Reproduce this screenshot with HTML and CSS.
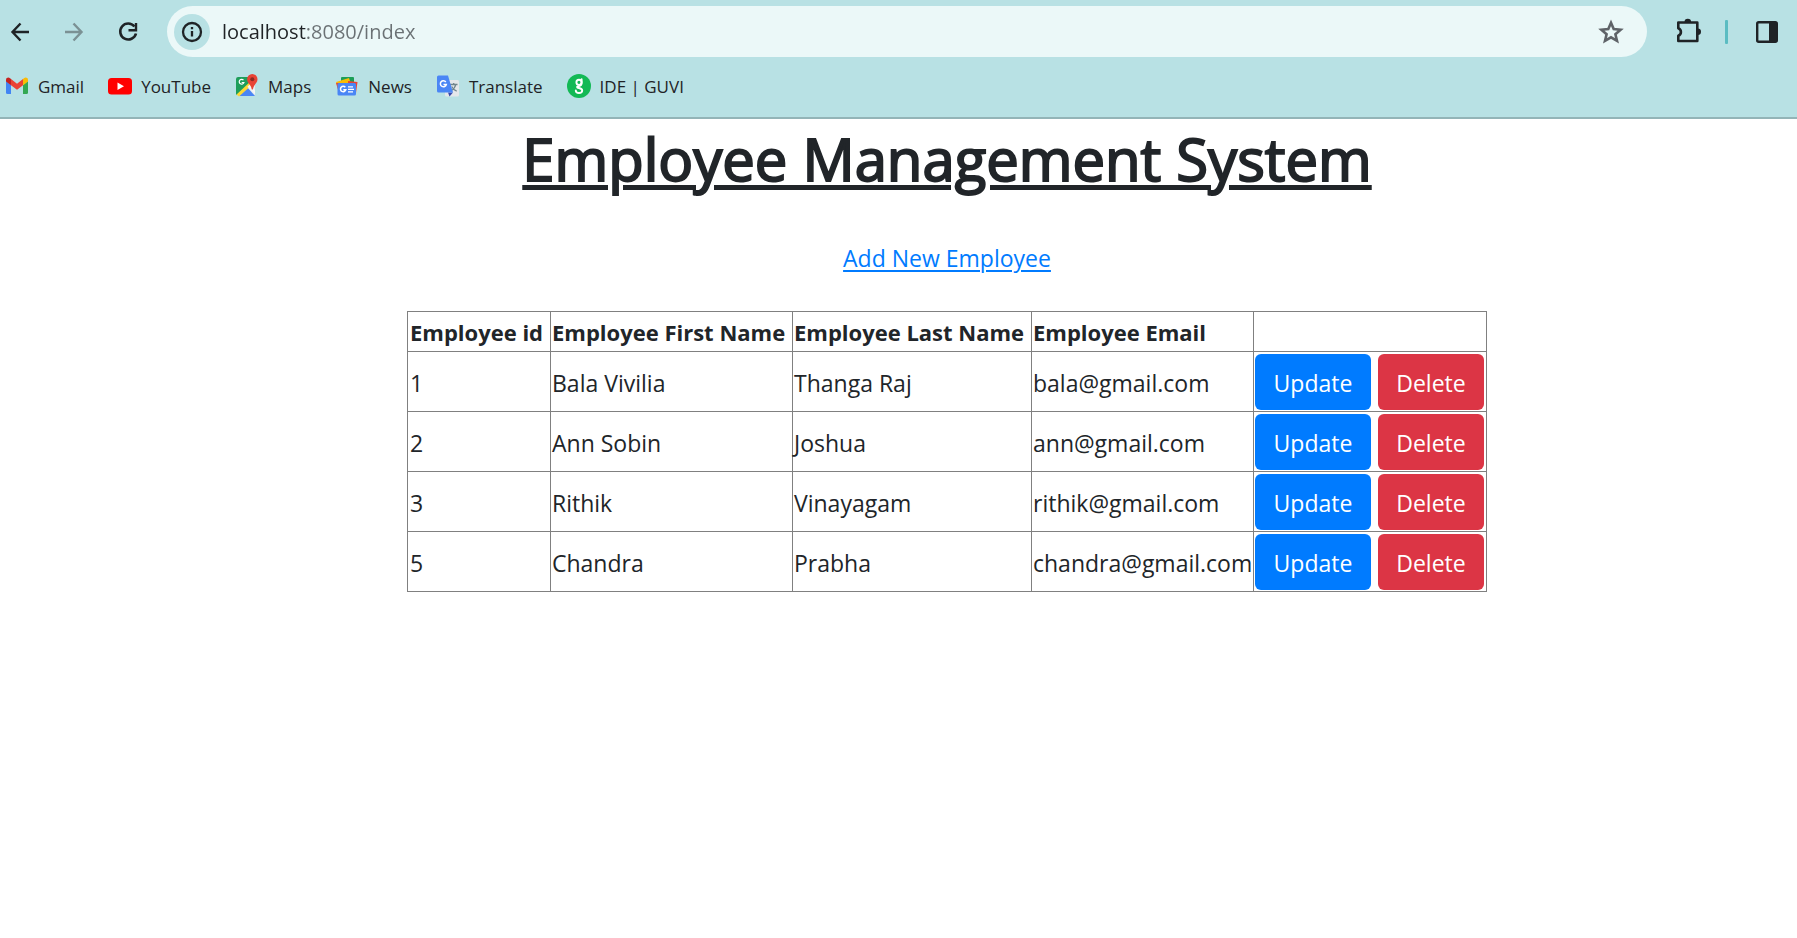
FILE: index.html
```html
<!DOCTYPE html>
<html lang="en">
<head>
<meta charset="utf-8">
<meta name="viewport" content="width=device-width, initial-scale=1">
<title>Employee Management System</title>
<link rel="stylesheet" href="styles.css">
</head>
<body>
<header class="browser">
  <div class="toolbar">
    <div class="nav">
      <button class="tool" aria-label="Back"><svg width="20" height="20" viewBox="0 0 20 20" fill="none" stroke="#1f2326" stroke-width="2.4"><path d="M19 10H3M10.500 1.500L2.500 10l8 8.500"/></svg></button>
      <button class="tool" aria-label="Forward"><svg width="20" height="20" viewBox="0 0 20 20" fill="none" stroke="#7b9194" stroke-width="2.400"><path d="M1 10h16M9.500 1.500L17.500 10l-8 8.500"/></svg></button>
      <button class="tool" aria-label="Reload"><svg width="20" height="20" viewBox="0 0 20 20" fill="none" stroke="#1f2326" stroke-width="2.600"><path d="M16.500 4.500A8 8 0 1 0 18 11.500"/><path d="M18 1v7.200h-7.500" stroke-width="2.400"/></svg></button>
    </div>
    <div class="omnibox">
      <button class="site-info" aria-label="View site information"><svg width="22" height="22" viewBox="0 0 22 22" fill="none" stroke="#1f2326" stroke-width="2.300"><circle cx="11" cy="11" r="9"/><path d="M11 10v5.500M11 6v2.200"/></svg></button>
      <input class="address" type="text" aria-label="Address" value="localhost:8080/index" spellcheck="false">
      <button class="tool" aria-label="Bookmark this tab"><svg width="26" height="26" viewBox="0 0 26 26" fill="none" stroke="#5f6368" stroke-width="2.600"><path d="M13 3.800l2.700 6.300 6.900.6-5.200 4.500 1.600 6.700-6-3.600-6 3.600 1.600-6.700-5.200-4.500 6.900-.6z"/></svg></button>
    </div>
    <div class="actions">
      <button class="tool" aria-label="Extensions"><svg width="28" height="28" viewBox="0 0 28 28"><path d="M4.300 4.500h19v18.500h-19v-5.300a4 4 0 0 0 0-7.500z" fill="none" stroke="#1f2326" stroke-width="2.600" stroke-linejoin="round"/><path d="M10.500 4a3.300 3.300 0 0 1 6.600 0zM23.700 10.500a3.300 3.300 0 0 1 0 6.600z" fill="#1f2326"/></svg></button>
      <span class="divider"></span>
      <button class="tool" aria-label="Side panel"><svg width="24" height="24" viewBox="0 0 24 24"><rect x="2.200" y="2.200" width="19.600" height="19.600" rx="1.500" fill="none" stroke="#1f2326" stroke-width="2.400"/><path d="M14 2h7.500v20H14z" fill="#1f2326"/></svg></button>
    </div>
  </div>
  <nav class="bookmarks" aria-label="Bookmarks">
    <a class="bookmark" href="#"><svg width="24" height="24" viewBox="0 0 24 24"><path d="M1 7l5 4v9H2.500A1.500 1.500 0 0 1 1 18.500z" fill="#4285f4"/><path d="M23 7l-5 4v9h3.500a1.500 1.500 0 0 0 1.500-1.500z" fill="#34a853"/><path d="M6 5l6 4.700L18 5v6.200l-6 4.600-6-4.600z" fill="#ea4335"/><path d="M1 7.400V6c0-2.300 2.500-3 4-1.800L6 5v6.200z" fill="#c5221f"/><path d="M23 7.400V6c0-2.300-2.500-3-4-1.800L18 5v6.200z" fill="#fbbc04"/></svg>Gmail</a>
    <a class="bookmark" href="#"><svg width="24" height="24" viewBox="0 0 24 24"><rect y="4" width="24" height="16.500" rx="3.500" fill="#f00"/><path d="M9.500 8.500v7.500l6.500-3.750z" fill="#fff"/></svg>YouTube</a>
    <a class="bookmark" href="#"><svg width="24" height="24" viewBox="0 0 24 24"><rect x="1" y="3" width="19" height="19" rx="2" fill="#e8eaed"/><path d="M3 3h13l-2 6 1 2L2 21.500 1 20V5q0-2 2-2z" fill="#1e9e5a"/><path d="M3 22L12 13l8 9z" fill="#4a86f5"/><path d="M1.500 20.500L16 7l3 2L4 22.500z" fill="#fdd835"/><path d="M12.500 12.700l2-2 5.500 5.500V20z" fill="#f5f5f5"/><path d="M17.300 0a5.200 5.200 0 0 1 5.200 5.300c0 4-3.700 4.700-4.700 10.200h-1c-1-5.500-4.700-6.200-4.700-10.200A5.200 5.200 0 0 1 17.300 0z" fill="#e84335"/><circle cx="17.300" cy="5.300" r="2" fill="#8d2b23"/><path d="M8.500 6.200a2.400 2.400 0 1 0 .4 2.300H6.700" fill="none" stroke="#fff" stroke-width="1.200"/></svg>Maps</a>
    <a class="bookmark" href="#"><svg width="24" height="24" viewBox="0 0 24 24"><rect x="6" y="3" width="13" height="9" rx="1" fill="#1b9e57"/><path d="M1 8l13-4 3 9-13 6z" fill="#fbbc04"/><path d="M13 7l9.500 1-1.500 11-8-2z" fill="#ea4335"/><path d="M1 9l3 10V9z" fill="#ea4335"/><rect x="2.500" y="9" width="18.500" height="12.500" rx="1.500" fill="#4a86f5"/><path d="M10.300 13.300a2.700 2.700 0 1 0 .5 2.500H8.300" fill="none" stroke="#fff" stroke-width="1.500"/><path d="M13 12.800h5M13 15.300h6M13 17.800h5" stroke="#fff" stroke-width="1.300"/></svg>News</a>
    <a class="bookmark" href="#"><svg width="24" height="24" viewBox="0 0 24 24"><rect x="9" y="6" width="14" height="16.500" rx="1.500" fill="#e4e7ea"/><path d="M14 10.500h7.500M17.700 9v1.500M19.700 10.500c-.5 3-2.500 5-4.500 6.200M15.700 12.500c1 2 3 4 5 4.700" fill="none" stroke="#71858c" stroke-width="1.300"/><path d="M12 18.500h5L13.500 22.500z" fill="#3949ab"/><path d="M2.500 1.500H12L17 18.500H2.500A1.500 1.500 0 0 1 1 17V3q0-1.500 1.500-1.500z" fill="#4a86f5"/><path d="M9.800 8a3 3 0 1 0 .5 2.500H7.500" fill="none" stroke="#fff" stroke-width="1.500"/></svg>Translate</a>
    <a class="bookmark" href="#"><svg width="24" height="24" viewBox="0 0 24 24"><circle cx="12" cy="12" r="12" fill="#13b955"/><g fill="none" stroke="#fff" stroke-width="1.900" stroke-linecap="round"><circle cx="12" cy="8.300" r="2.600"/><path d="M14.600 5.300v3.500c0 2-1 3-2.600 3.200-2 .2-2.500 1.300-1 1.800 2 .5 4.200.6 4.200 2.700 0 3.300-6.400 3.300-6.400 0"/></g></svg>IDE | GUVI</a>
  </nav>
</header>
<main class="page">
  <h1 class="title">Employee Management System</h1>
  <a class="add-link" href="#">Add New Employee</a>
  <table class="employees">
    <colgroup><col class="col-id"><col class="col-first"><col class="col-last"><col class="col-email"><col class="col-actions"></colgroup>
    <thead>
      <tr><th>Employee id</th><th>Employee First Name</th><th>Employee Last Name</th><th>Employee Email</th><th></th></tr>
    </thead>
    <tbody>
      <tr><td>1</td><td>Bala Vivilia</td><td>Thanga Raj</td><td>bala@gmail.com</td><td class="actions-cell"><div class="row-actions"><button class="btn update">Update</button><button class="btn delete">Delete</button></div></td></tr>
      <tr><td>2</td><td>Ann Sobin</td><td>Joshua</td><td>ann@gmail.com</td><td class="actions-cell"><div class="row-actions"><button class="btn update">Update</button><button class="btn delete">Delete</button></div></td></tr>
      <tr><td>3</td><td>Rithik</td><td>Vinayagam</td><td>rithik@gmail.com</td><td class="actions-cell"><div class="row-actions"><button class="btn update">Update</button><button class="btn delete">Delete</button></div></td></tr>
      <tr><td>5</td><td>Chandra</td><td>Prabha</td><td>chandra@gmail.com</td><td class="actions-cell"><div class="row-actions"><button class="btn update">Update</button><button class="btn delete">Delete</button></div></td></tr>
    </tbody>
  </table>
</main>
</body>
</html>
```
FILE: styles.css
```css
* { box-sizing: border-box; }

body {
  margin: 0;
  background: #fff;
  color: #212529;
  font-family: "Open Sans", "Noto Sans", sans-serif;
  font-size: 23px;
}

button {
  margin: 0;
  padding: 0;
  border: 0;
  background: none;
  font: inherit;
  cursor: pointer;
}

svg { display: block; flex: none; }

.browser {
  background: #b8e1e4;
  border-bottom: 2px solid #93b4b7;
}

.toolbar {
  display: flex;
  align-items: center;
  padding: 6px 18px 0 10px;
}

.nav {
  display: flex;
  gap: 34px;
  margin-right: 29px;
}

.omnibox {
  flex: 1;
  display: flex;
  align-items: center;
  height: 51px;
  padding: 0 23px 0 7px;
  border-radius: 26px;
  background: #ebf8f8;
}

.site-info {
  display: flex;
  align-items: center;
  justify-content: center;
  width: 36px;
  height: 36px;
  margin-right: 12px;
  border-radius: 50%;
  background: #b8e1e4;
}

.address {
  flex: 1;
  min-width: 0;
  padding: 0;
  border: 0;
  outline: 0;
  font: inherit;
  font-size: 20px;
  color: transparent;
  background: linear-gradient(90deg, #1f2326 84px, #6a7174 84px);
  -webkit-background-clip: text;
  background-clip: text;
}

.actions {
  display: flex;
  align-items: center;
  margin-left: 27px;
}

.divider {
  width: 3px;
  height: 24px;
  margin: 0 27px 0 23px;
  border-radius: 1px;
  background: #5bbcc2;
}

.bookmarks {
  display: flex;
  align-items: center;
  gap: 24px;
  height: 60px;
  padding: 0 5px 2px;
}

.bookmark {
  display: flex;
  align-items: center;
  gap: 9px;
  color: #1f2326;
  font-size: 17px;
  text-decoration: none;
  white-space: nowrap;
}

.page {
  display: flex;
  flex-direction: column;
  align-items: center;
  padding-left: 97px;
}

.title {
  margin: 0;
  font-size: 58px;
  font-weight: 400;
  line-height: 80px;
  -webkit-text-stroke: 2px #212529;
  text-decoration: underline;
  text-decoration-thickness: 5px;
  text-underline-offset: 4px;
}

.add-link {
  margin: 41px 0 35px;
  color: #007bff;
  line-height: 36px;
  text-decoration-thickness: 2px;
  text-underline-offset: 3px;
}

.employees {
  table-layout: fixed;
  width: 1080px;
  border-collapse: collapse;
  line-height: 36px;
  white-space: nowrap;
}

.employees th,
.employees td {
  padding: 2px 1px 1px;
  border: 1px solid #808080;
  text-align: left;
}

.employees th:first-child,
.employees td:first-child { padding-left: 2px; }

.employees th { font-size: 22px; }

.employees td { padding-top: 4px; }

.employees .actions-cell { padding: 2px 2px 1px 1px; }

.col-id { width: 143px; }
.col-first { width: 242px; }
.col-last { width: 239px; }
.col-email { width: 222px; }
.col-actions { width: 233px; }

.row-actions {
  display: flex;
  gap: 7px;
}

.btn {
  flex: 116 1 0;
  height: 56px;
  padding-top: 2px;
  border-radius: 6px;
  color: #fff;
  text-align: center;
}

.update { background: #007bff; }
.delete { flex-grow: 106; background: #dc3545; }
```
